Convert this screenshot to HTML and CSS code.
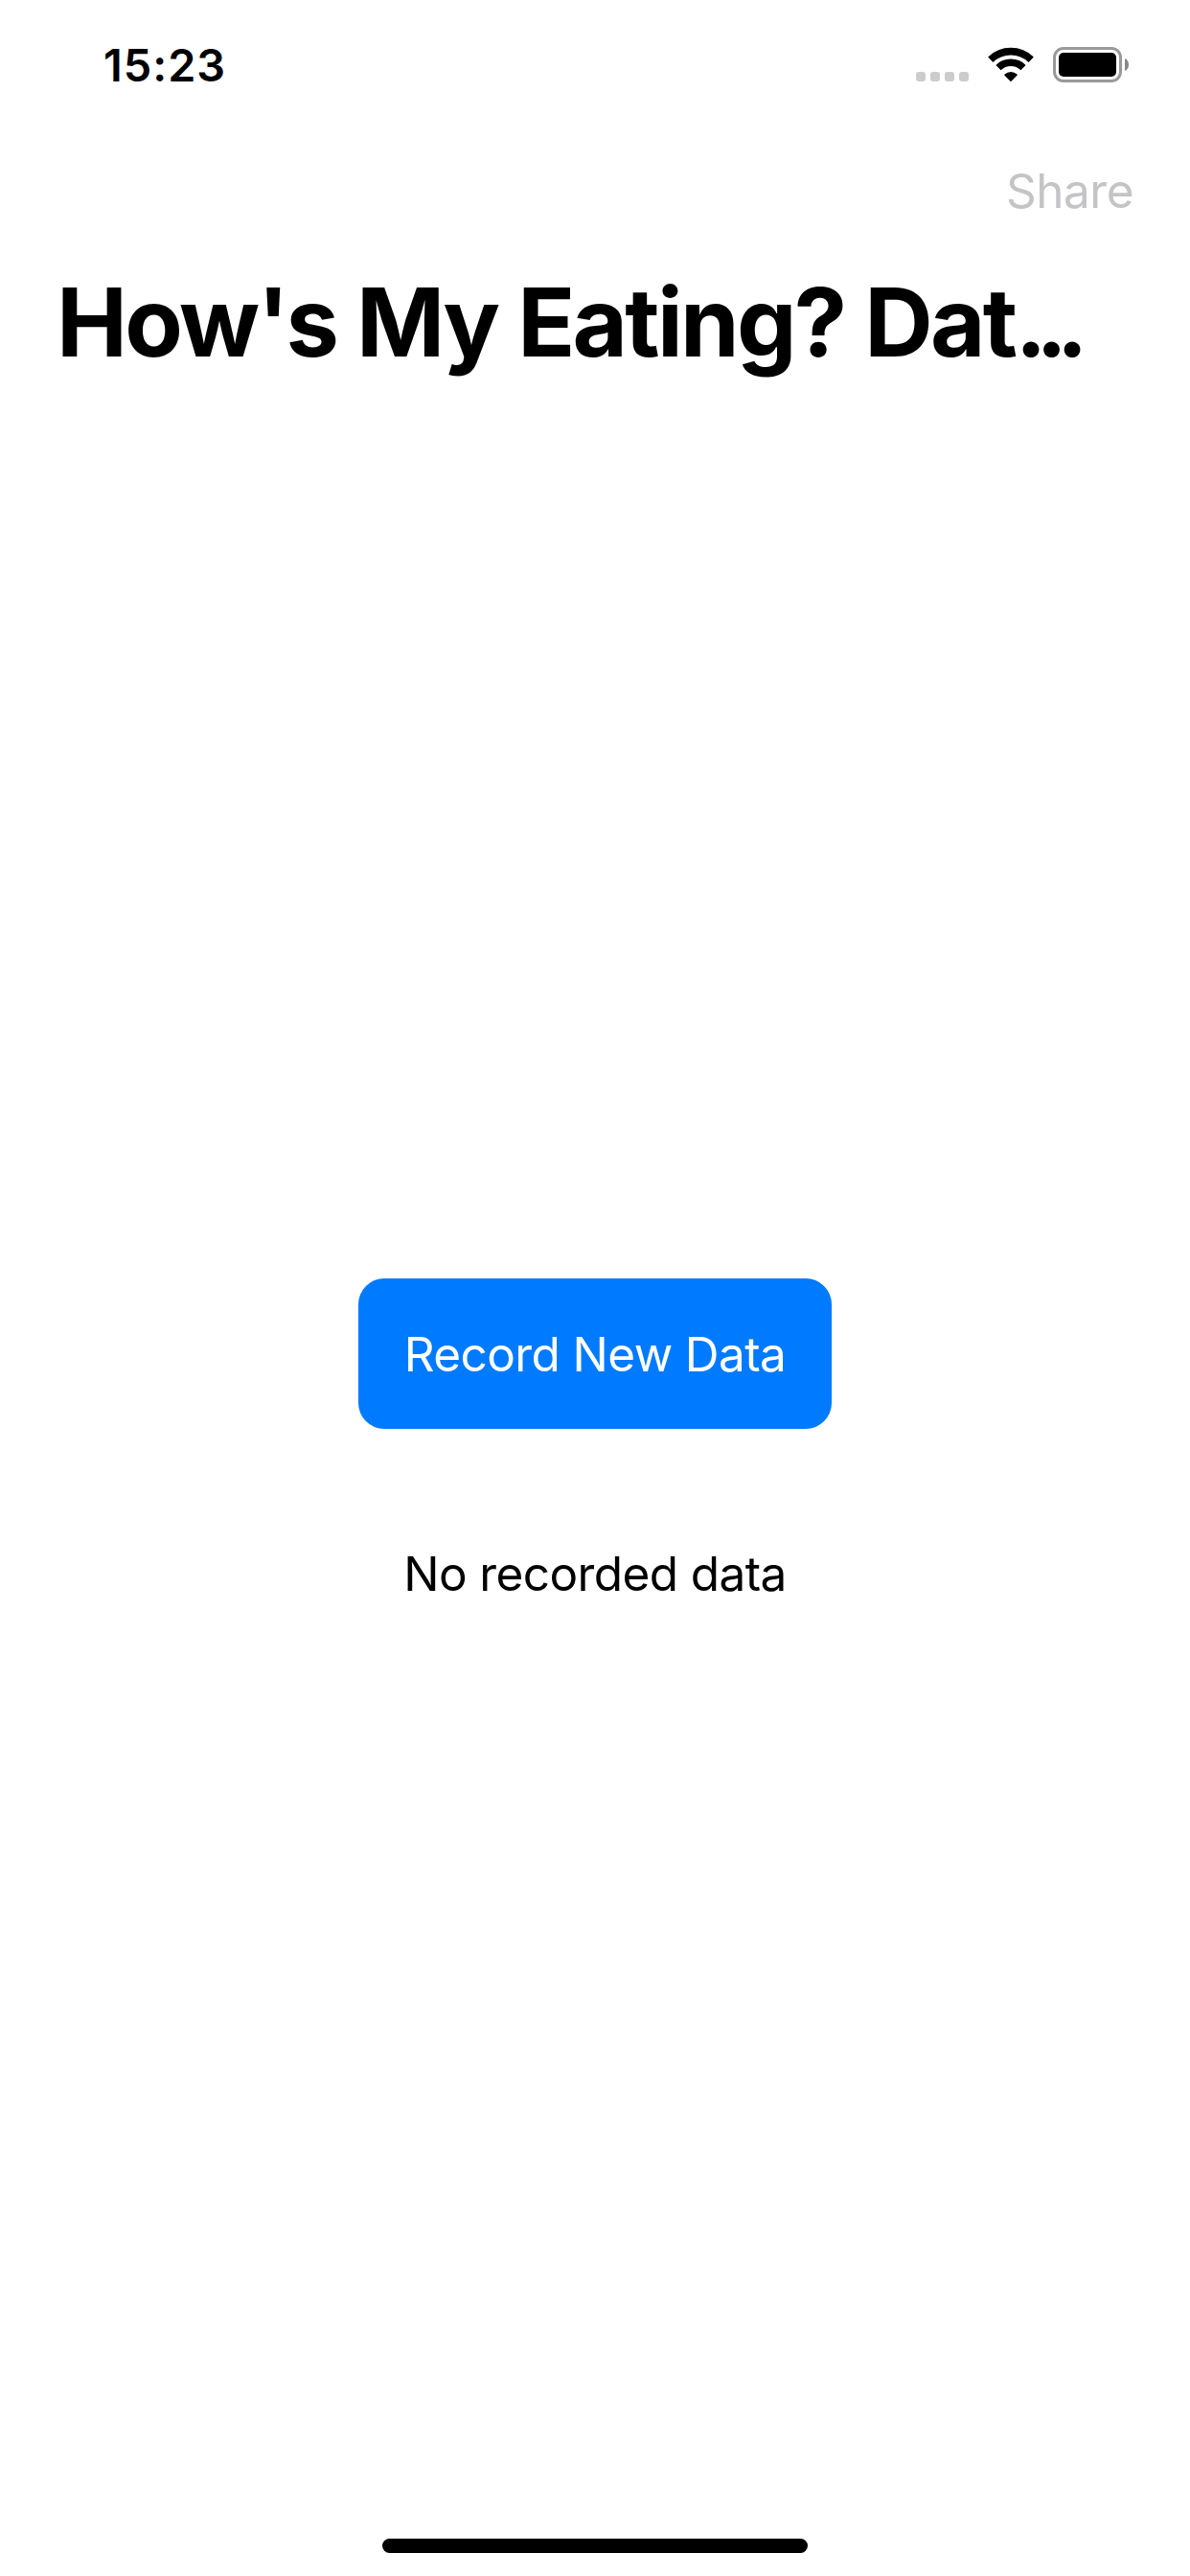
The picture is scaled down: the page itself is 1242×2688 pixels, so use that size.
FILE: index.html
```html
<!DOCTYPE html>
<html lang="en">
<head>
<meta charset="utf-8">
<title>How's My Eating?</title>
<link rel="stylesheet" href="styles.css">
</head>
<body>
<div class="screen">
  <div class="status">
    <span class="time">15:23</span>
    <div class="indicators">
      <svg class="cell" width="55" height="37" viewBox="0 0 55 37" fill="#ccc">
        <rect x="0" y="26" width="10" height="10" rx="3"/>
        <rect x="15" y="26" width="10" height="10" rx="3"/>
        <rect x="30" y="26" width="10" height="10" rx="3"/>
        <rect x="45" y="26" width="10" height="10" rx="3"/>
      </svg>
      <svg class="wifi" width="48" height="37" viewBox="0 0 48 37">
        <g fill="none" stroke="#000">
          <path d="M2.8 13.2A30.5 30.5 0 0 1 45.2 13.2" stroke-width="7.6"/>
          <path d="M11 21.6A18.6 18.6 0 0 1 37 21.6" stroke-width="7.4"/>
        </g>
        <path d="M24 36.2L17.3 29.6Q16.9 29 17.5 28.5Q20.3 26 24 26Q27.7 26 30.5 28.5Q31.1 29 30.7 29.6Z"/>
      </svg>
      <svg class="battery" width="79" height="37" viewBox="0 0 79 37">
        <rect x="1.5" y="1.5" width="69" height="34" rx="9.5" fill="none" stroke="#999" stroke-width="3"/>
        <rect x="6" y="6" width="60" height="25" rx="5"/>
        <path d="M75 12Q79 13.8 79 18.5Q79 23.2 75 25Z" fill="#888"/>
      </svg>
    </div>
  </div>
  <nav class="nav"><span class="share">Share</span></nav>
  <h1 class="title">How's My Eating? Dat<span class="dots">...</span></h1>
  <main class="content">
    <button class="record">Record New Data</button>
    <p class="empty">No recorded data</p>
  </main>
  <footer class="home"><div class="home-bar"></div></footer>
</div>
</body>
</html>
```
FILE: styles.css
```css
* { box-sizing: border-box; }
body {
  margin: 0;
  background: #fff;
  color: #000;
  font-family: Inter, "Liberation Sans", sans-serif;
  font-size: 49.5px;
}
.screen {
  display: flex;
  flex-direction: column;
  width: 1242px;
  height: 2688px;
}
.status {
  display: flex;
  justify-content: space-between;
  align-items: center;
  height: 135px;
  padding: 0 64px 0 108px;
}
.time {
  font-size: 46.8px;
  font-weight: 600;
  line-height: 60px;
  letter-spacing: 1px;
}
.indicators { display: flex; }
.wifi { margin: 0 20px; }
.nav {
  display: flex;
  justify-content: flex-end;
  align-items: center;
  height: 127px;
  padding-right: 59px;
}
.share {
  color: #c4c4c6;
  line-height: 60px;
  letter-spacing: -0.5px;
}
.title {
  margin: 0;
  padding-left: 59px;
  font-size: 99px;
  font-weight: 700;
  line-height: 148px;
  letter-spacing: -2.7px;
  white-space: nowrap;
}
.dots { letter-spacing: -11.5px; }
.content {
  flex: 1;
  display: flex;
  flex-direction: column;
  justify-content: center;
  align-items: center;
  gap: 121px;
}
.record {
  width: 494px;
  height: 157px;
  padding: 0;
  border: 0;
  border-radius: 27px;
  background: #007aff;
  color: #fff;
  font: inherit;
  line-height: 60px;
  letter-spacing: -0.6px;
}
.empty {
  margin: 0;
  line-height: 60px;
  letter-spacing: -0.6px;
}
.home {
  display: flex;
  justify-content: center;
  align-items: flex-end;
  height: 92px;
  padding-bottom: 24px;
}
.home-bar {
  width: 444px;
  height: 15px;
  border-radius: 8px;
  background: #000;
}
```
